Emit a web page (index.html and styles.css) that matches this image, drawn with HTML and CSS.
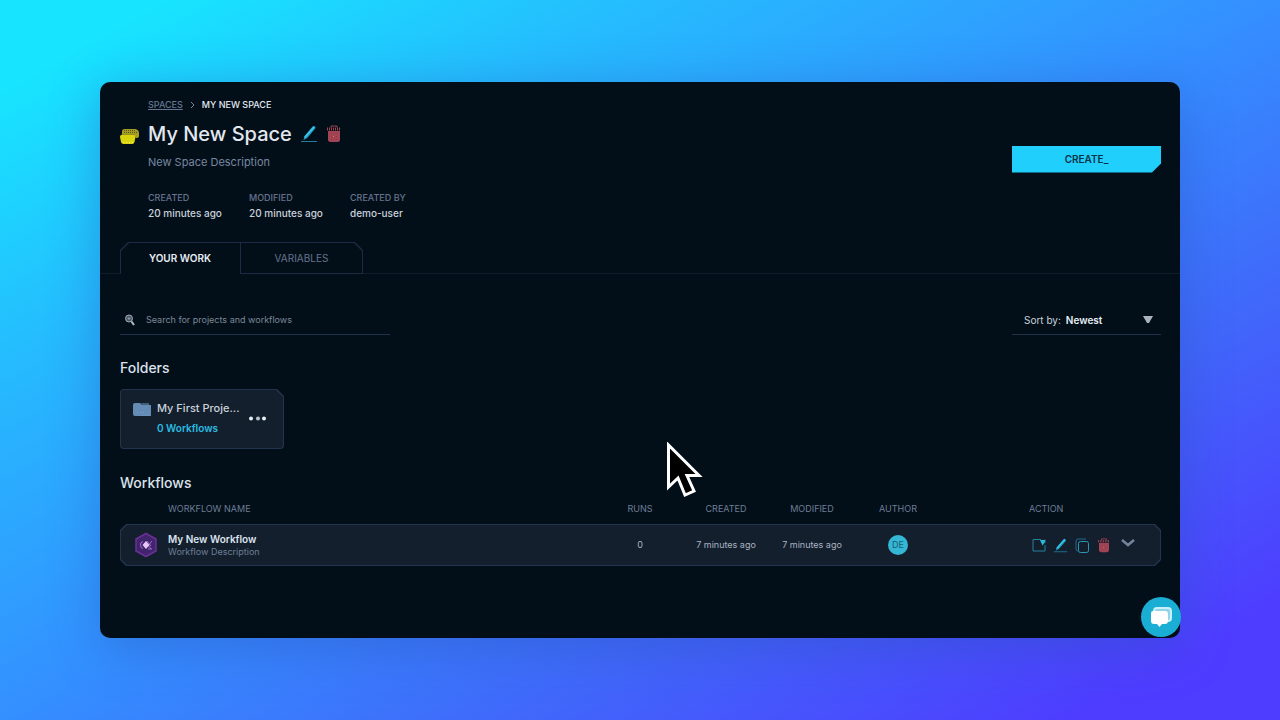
FILE: index.html
```html
<!DOCTYPE html>
<html lang="en">
<head>
<meta charset="utf-8">
<meta name="viewport" content="width=device-width, initial-scale=1">
<title>My New Space</title>
<link rel="stylesheet" href="styles.css">
</head>
<body>
<svg width="0" height="0" class="sprite" aria-hidden="true">
  <symbol id="pencil" viewBox="0 0 18 18">
    <path d="M3.500 15 4.600 11 12.600 1.600Q13.800 .4 15 1.400 16 2.500 15 3.800L7.200 13Z" fill="#1f9fc6"/>
    <path d="M4.600 12.500 14 2" stroke="#3cc9ee" stroke-width="1.500" fill="none"/>
    <path d="M1 16.500H17" stroke="#1c7f9f" fill="none"/>
  </symbol>
  <symbol id="trash" viewBox="0 0 16 18">
    <path d="M5 2.500V1h6v1.500" stroke="#a34455" fill="none"/>
    <path d="M1 4H15" stroke="#a34455" stroke-width="3" stroke-dasharray="1 1"/>
    <path d="M2 6H14V14.500Q14 17 11.500 17H4.500Q2 17 2 14.500Z" fill="#a34455"/>
    <path d="M5.500 8V15M8 8V15M10.500 8V15" stroke="#8a3a4c" stroke-dasharray="1 2"/>
    <path d="M7 11h1v1H7z" fill="#dd8540"/>
  </symbol>
</svg>
<main class="panel">
  <header class="head">
    <div class="intro">
      <nav class="crumbs" aria-label="Breadcrumb">
        <a href="#">SPACES</a>
        <svg width="5" height="8" viewBox="0 0 5 8" aria-hidden="true"><path d="M1 1 4 4 1 7" stroke="#7886a0" fill="none"/></svg>
        <span>MY NEW SPACE</span>
      </nav>
      <div class="title-row">
        <svg class="space-icon" width="20" height="17" viewBox="0 0 20 17" aria-hidden="true">
          <path d="M2 3.500Q2 1 4.500 1H15.500Q19 2 19 5V8Q19 10 16 10L14 6.500H2Z" fill="#a59e24"/>
          <path d="M4 2.500H15M4 4.500H17" stroke="#57551f" stroke-dasharray="1 1"/>
          <path d="M0 9Q0 6.500 2.500 6.500H13Q15.500 6.500 15.500 9L14.500 14Q14 16 12 16H3.500Q1.500 16 1 14Z" fill="#d9d40d"/>
          <path d="M3 14.500H13" stroke="#fff56b" stroke-dasharray="1 2"/>
        </svg>
        <h1>My New Space</h1>
        <button class="icon-btn" aria-label="Edit space"><svg width="18" height="18"><use href="#pencil"/></svg></button>
        <button class="icon-btn" aria-label="Delete space"><svg width="16" height="18"><use href="#trash"/></svg></button>
      </div>
      <p class="description">New Space Description</p>
      <dl class="facts">
        <div><dt>CREATED</dt><dd>20 minutes ago</dd></div>
        <div><dt>MODIFIED</dt><dd>20 minutes ago</dd></div>
        <div><dt>CREATED BY</dt><dd>demo-user</dd></div>
      </dl>
    </div>
    <button class="create">CREATE_</button>
  </header>
  <div class="tabs" role="tablist">
    <button class="tab tab-left" role="tab" aria-selected="true">YOUR WORK</button>
    <button class="tab tab-right" role="tab" aria-selected="false">VARIABLES</button>
  </div>
  <div class="content">
    <div class="toolbar">
      <label class="search">
        <svg width="10" height="12" viewBox="0 0 10 12" aria-hidden="true"><circle cx="4" cy="4.500" r="3.500" fill="#4a5563" stroke="#a3adb9"/><path d="M2.500 4.500H5.500M4 3V6" stroke="#8d98a6"/><path d="M6.500 7.500 9 11" stroke="#b5bdc7" stroke-width="2"/></svg>
        <input type="search" aria-label="Search" placeholder="Search for projects and workflows">
      </label>
      <label class="sort">Sort by:
        <select><option>Newest</option><option>Oldest</option></select>
        <svg width="10" height="8" viewBox="0 0 10 8" aria-hidden="true"><path d="M0 0H10L6 7H4Z" fill="#aab3bd"/></svg>
      </label>
    </div>
    <section>
      <h2>Folders</h2>
      <article class="folder">
        <svg width="18" height="14" viewBox="0 0 18 14" aria-hidden="true"><path d="M0 2Q0 0 2 0H7L9 2H18V13H2Q0 13 0 11Z" fill="#638bb5"/><path d="M8 0H16V2H9Z" fill="#415e7c"/><path d="M4 9.500H13M9 12.500H17" stroke="#7b9ed0" stroke-dasharray="1 2"/></svg>
        <div class="folder-text"><h3>My First Proje...</h3><p>0 Workflows</p></div>
        <button class="icon-btn" aria-label="Folder options"><svg width="18" height="5" viewBox="0 0 18 5"><circle cx="2" cy="2.500" r="2" fill="#e8edf5"/><circle cx="9" cy="2.500" r="2" fill="#b9c1cc"/><circle cx="15" cy="2.500" r="2" fill="#e8edf5"/></svg></button>
      </article>
    </section>
    <section class="workflows">
      <h2>Workflows</h2>
      <table>
        <thead><tr><th>WORKFLOW NAME</th><th>RUNS</th><th>CREATED</th><th>MODIFIED</th><th>AUTHOR</th><th>ACTION</th></tr></thead>
        <tbody><tr>
          <td>
            <svg width="24" height="26" viewBox="0 0 24 26" aria-hidden="true">
              <path d="M12 1.500 22 7V19L12 24.500 2 19V7Z" fill="#40256a" stroke="#6b2f9a" stroke-width="1.500" stroke-linejoin="round"/>
              <path d="M9 9.500Q6 10.500 6.500 13 6.500 16 9 16.500M13 9 17 14M18 9 13 15M14 17H18M14 13 17 17" stroke="#a36bd6" fill="none"/>
              <path d="M12 9 15.500 13 12 17 8.500 13Z" fill="#e6c7f8"/>
            </svg>
            <div><strong>My New Workflow</strong><small>Workflow Description</small></div>
          </td>
          <td>0</td><td>7 minutes ago</td><td>7 minutes ago</td>
          <td><span class="avatar">DE</span></td>
          <td class="actions">
            <button class="icon-btn" aria-label="Open workflow"><svg width="14" height="14" viewBox="0 0 14 14"><path d="M9 1.500H1V13H13V7M13 5V1.500" stroke="#22819e" fill="none"/><path d="M8 2H13V4L10.500 7.500Z" fill="#2bb7d9"/></svg></button>
            <button class="icon-btn" aria-label="Edit workflow"><svg width="15" height="15"><use href="#pencil"/></svg></button>
            <button class="icon-btn" aria-label="Copy workflow"><svg width="15" height="15" viewBox="0 0 15 15"><path d="M11 1H3Q1 1 1 3V11Q1 13 3 13" stroke="#1e6988" fill="none"/><rect x="3.500" y="3.500" width="10" height="11" rx="2" stroke="#2b96b7" fill="none"/></svg></button>
            <button class="icon-btn" aria-label="Delete workflow"><svg width="14" height="15"><use href="#trash"/></svg></button>
            <button class="icon-btn expand" aria-label="Expand workflow"><svg width="14" height="9" viewBox="0 0 14 9"><path d="M1 1 7 6 13 1" stroke="#73839a" stroke-width="2.500" fill="none"/></svg></button>
          </td>
        </tr></tbody>
      </table>
    </section>
  </div>
  <button class="chat" aria-label="Open chat"><svg width="22" height="21" viewBox="0 0 22 21"><path d="M4 4Q4 1 7 1H18Q21 1 21 4V11Q21 14 18 14" fill="#8fd6ea" stroke="#cbeef7" stroke-width="2"/><path d="M3 4H15Q18 4 18 7V14Q18 17 15 17H12L9.500 20 7 17H4Q1 17 1 14V6Q1 4 3 4Z" fill="#fff"/></svg></button>
</main>
<svg class="pointer" width="36" height="56" viewBox="0 0 36 56" aria-hidden="true"><path d="M1.500 3V45L11 36 18 53 27 49 20 33.500H32Z" fill="#000" stroke="#fff" stroke-width="3"/></svg>
</body>
</html>
```

FILE: styles.css
```css
* { box-sizing: border-box; }

body {
  margin: 0;
  min-height: 100vh;
  padding: 82px 100px;
  display: flex;
  background: linear-gradient(to bottom right, #17e5ff 6%, #25bcfe 25%, #348fff 50%, #4068fa 70%, #4e3dff 92%);
  font: 10px/14px Inter, "Liberation Sans", sans-serif;
  color: #c9d1dc;
}

.sprite { position: absolute; }

h1, h2, h3, p, dl, dd { margin: 0; font-weight: 500; }

button, input, select { font: inherit; color: inherit; }

.panel {
  position: relative;
  flex: 1;
  min-width: 0;
  border-radius: 10px;
  background: #030f18;
  box-shadow: 0 10px 50px rgba(40, 75, 180, 0.4);
}

.icon-btn {
  display: flex;
  padding: 0;
  border: 0;
  background: none;
}

.head {
  display: flex;
  align-items: center;
  justify-content: space-between;
  padding: 16px 19px 22px 20px;
}

.intro { padding-left: 28px; }

.crumbs {
  display: flex;
  align-items: center;
  gap: 7px;
  font-size: 9px;
  font-weight: 500;
  color: #e2e8f0;
}

.crumbs a { color: #65758f; }

.title-row {
  display: flex;
  align-items: center;
  margin: 8px 0 6px -28px;
  height: 28px;
}

.space-icon { margin-top: 4px; margin-right: 8px; }

h1 {
  margin-right: 8px;
  font-size: 20px;
  line-height: 28px;
  color: #e2e8f0;
}

.title-row .icon-btn { margin-right: 8px; }

.description {
  font-size: 11px;
  line-height: 16px;
  font-weight: 400;
  color: #7787a1;
}

.facts {
  display: flex;
  margin-top: 22px;
}

.facts div { width: 101px; }

.facts dt {
  font-size: 9px;
  line-height: 12px;
  color: #64748e;
}

.facts dd { margin-top: 2px; }

.create {
  width: 149px;
  height: 27px;
  border: 0;
  background: #20cffc;
  clip-path: polygon(0 0, 100% 0, 100% 18px, calc(100% - 9px) 100%, 0 100%);
  color: #07334a;
  font-weight: 600;
}

.tabs {
  display: flex;
  padding-left: 20px;
  box-shadow: inset 0 -1px #0e1d29;
}

.tab {
  position: relative;
  z-index: 0;
  height: 32px;
  padding: 0;
  border: 0;
  background: #1c2b43;
}

.tab::before {
  content: "";
  position: absolute;
  z-index: -1;
  background: #030f18;
}

.tab-left {
  width: 120px;
  clip-path: polygon(8px 0, 100% 0, 100% 100%, 0 100%, 0 8px);
  color: #e7edf5;
  font-weight: 600;
}

.tab-left::before {
  inset: 1px 0 0 1px;
  clip-path: polygon(8px 0, 100% 0, 100% 100%, 0 100%, 0 8px);
}

.tab-right {
  width: 123px;
  clip-path: polygon(0 0, calc(100% - 8px) 0, 100% 8px, 100% 100%, 0 100%);
  color: #64748e;
}

.tab-right::before {
  inset: 1px;
  clip-path: polygon(0 0, calc(100% - 8px) 0, 100% 8px, 100% 100%, 0 100%);
}

.content { padding: 32px 19px 24px 20px; }

.toolbar {
  display: flex;
  justify-content: space-between;
}

.search, .sort {
  display: flex;
  align-items: center;
  height: 29px;
  border-bottom: 1px solid #22314a;
}

.search {
  width: 270px;
  padding-left: 5px;
  gap: 11px;
}

.search input {
  flex: 1;
  min-width: 0;
  padding: 0;
  border: 0;
  outline: 0;
  background: none;
  font-size: 9px;
}

.search input::placeholder { color: #7c8798; }

.sort {
  width: 149px;
  padding: 0 8px 0 12px;
  gap: 5px;
}

.sort select {
  flex: 1;
  min-width: 0;
  padding: 0;
  border: 0;
  appearance: none;
  background: none;
  color: #e7edf5;
  font-weight: 600;
}

h2 {
  font-size: 14px;
  line-height: 20px;
  color: #dbe2ec;
}

section { margin-top: 23px; }

.folder {
  display: flex;
  align-items: flex-start;
  width: 164px;
  height: 60px;
  margin-top: 11px;
  padding: 11px 17px 0 13px;
  position: relative;
  z-index: 0;
  border-radius: 4px;
  background: #22354e;
  clip-path: polygon(0 0, calc(100% - 7px) 0, 100% 7px, 100% 100%, 0 100%);
}

.folder::before {
  content: "";
  position: absolute;
  inset: 1px;
  z-index: -1;
  border-radius: 3px;
  background: #141f2d;
  clip-path: polygon(0 0, calc(100% - 7px) 0, 100% 7px, 100% 100%, 0 100%);
}

.folder > svg { margin-top: 3px; }

.folder .icon-btn { margin-top: 16px; }

.folder-text {
  width: 86px;
  margin: 0 auto 0 6px;
}

.folder h3 {
  white-space: nowrap;
  font-size: 11px;
  line-height: 16px;
}

.folder p {
  margin-top: 5px;
  font-weight: 600;
  color: #2abbe2;
}

section.workflows { margin-top: 24px; }

table { display: block; margin-top: 8px; }

thead, tbody { display: block; }

tr {
  display: grid;
  grid-template-columns: 1fr repeat(4, 86px) 220px;
  align-items: center;
}

th {
  padding: 0;
  font-size: 9px;
  line-height: 16px;
  font-weight: 400;
  color: #6d7d96;
}

th:first-child { padding-left: 48px; text-align: left; }
th:last-child { padding-left: 88px; text-align: left; }

td {
  display: flex;
  justify-content: center;
  padding: 0;
  font-size: 9px;
  color: #a9b3c1;
}

td:first-child {
  justify-content: flex-start;
  align-items: center;
  gap: 10px;
  padding-left: 14px;
}

tbody tr {
  position: relative;
  z-index: 0;
  height: 42px;
  margin-top: 7px;
  background: #22354e;
}

tbody tr::before {
  content: "";
  position: absolute;
  inset: 1px;
  z-index: -1;
  background: #141f2d;
}

tbody tr, tbody tr::before {
  clip-path: polygon(6px 0, calc(100% - 6px) 0, 100% 6px, 100% calc(100% - 6px), calc(100% - 6px) 100%, 6px 100%, 0 calc(100% - 6px), 0 6px);
}

td strong, td small { display: block; }

td strong {
  font-size: 10px;
  line-height: 14px;
  font-weight: 600;
  color: #dce3ed;
}

td small {
  font-size: 9px;
  line-height: 12px;
  color: #6c7e96;
}

.avatar {
  width: 20px;
  border-radius: 50%;
  background: #35b6d5;
  color: #155d72;
  font-size: 9px;
  line-height: 20px;
  text-align: center;
}

td.actions {
  justify-content: flex-start;
  align-items: center;
  gap: 7px;
  padding-left: 91px;
}

.expand { margin: 0 0 4px 3px; }

.chat {
  position: absolute;
  right: -1px;
  bottom: 1px;
  width: 40px;
  height: 40px;
  display: flex;
  align-items: center;
  justify-content: center;
  padding: 0;
  border: 0;
  border-radius: 50%;
  background: #1baed5;
}

.pointer {
  position: absolute;
  left: 667px;
  top: 442px;
}
```
